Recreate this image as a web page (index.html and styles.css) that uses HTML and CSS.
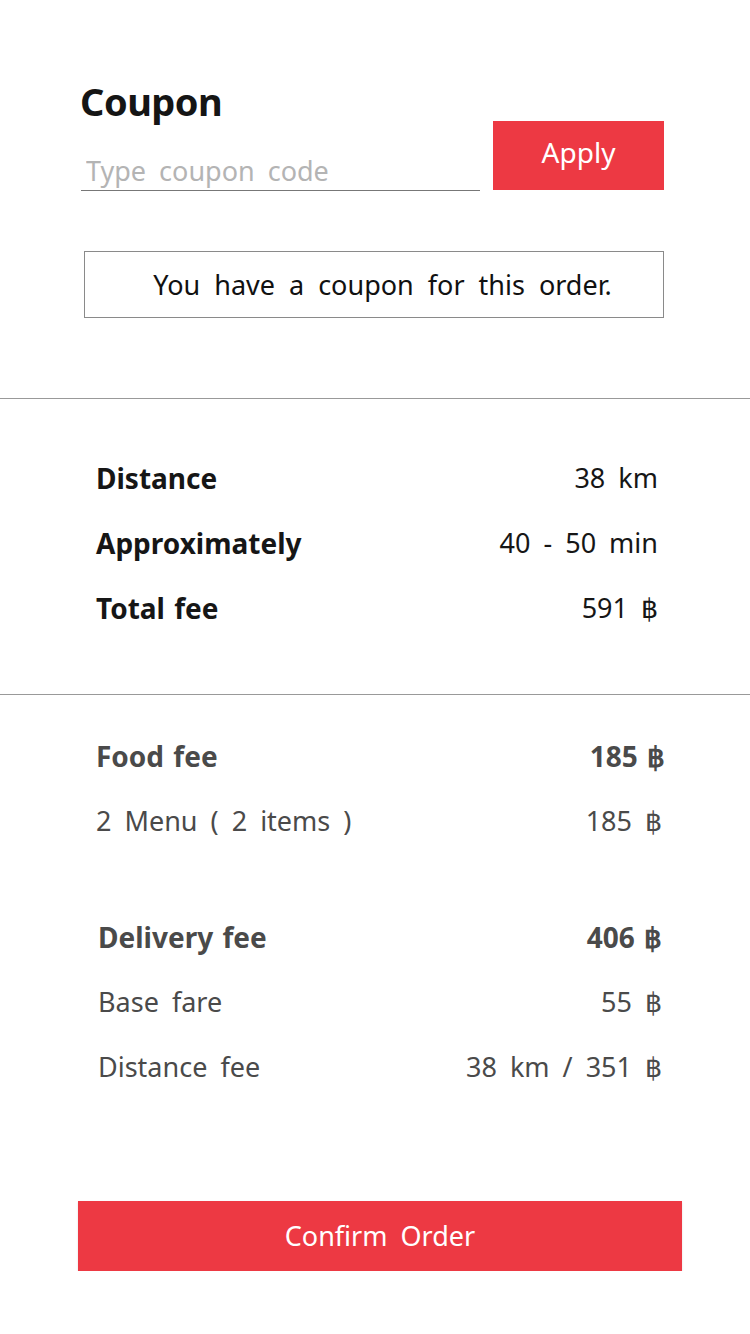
FILE: index.html
```html
<!DOCTYPE html>
<html lang="en">
<head>
<meta charset="utf-8">
<title>Coupon</title>
<link rel="stylesheet" href="styles.css">
</head>
<body>
<main class="page">
  <section class="coupon">
    <h1 class="coupon-title">Coupon</h1>
    <div class="coupon-row">
      <input class="coupon-input" type="text" placeholder="Type coupon code">
      <button class="btn apply-btn" type="button">Apply</button>
    </div>
    <div class="coupon-note">You have a coupon for this order.</div>
  </section>

  <section class="summary">
    <div class="row strong"><span>Distance</span><span class="val">38 km</span></div>
    <div class="row strong"><span>Approximately</span><span class="val">40 - 50 min</span></div>
    <div class="row strong"><span>Total fee</span><span class="val">591 ฿</span></div>
  </section>

  <section class="details">
    <div class="group">
      <div class="row head"><span>Food fee</span><span>185 ฿</span></div>
      <div class="row"><span>2 Menu ( 2 items )</span><span>185 ฿</span></div>
    </div>
    <div class="group group-delivery">
      <div class="row head"><span>Delivery fee</span><span>406 ฿</span></div>
      <div class="row"><span>Base fare</span><span>55 ฿</span></div>
      <div class="row"><span>Distance fee</span><span>38 km / 351 ฿</span></div>
    </div>
  </section>

  <div class="confirm-wrap">
    <button class="btn confirm-btn" type="button">Confirm Order</button>
  </div>
</main>
</body>
</html>
```

FILE: styles.css
```css
* { box-sizing: border-box; }
html, body { margin: 0; padding: 0; background: #fff; }
body {
  font-family: "Noto Sans", "Open Sans", sans-serif;
  color: #111;
  width: 750px;
  word-spacing: 6px;
}
.page { display: flex; flex-direction: column; }

.coupon { padding: 80px 86px 0 80px; }
.coupon-title {
  margin: 0;
  font-size: 38px;
  font-weight: 700;
  line-height: 42px;
  color: #151515;
  letter-spacing: -0.5px;
}
.coupon-row {
  display: flex;
  align-items: flex-end;
  gap: 13px;
  margin-top: -1px;
}
.coupon-input {
  width: 399px;
  margin-left: 1px;
  height: 40px;
  border: none;
  border-bottom: 1px solid #777;
  padding: 0 0 0 5px;
  font-family: inherit;
  font-size: 27px;
  word-spacing: 6px;
  color: #333;
  outline: none;
  background: transparent;
}
.coupon-input::placeholder { color: #b4b4b4; }
.btn {
  border: none;
  background: #ed3943;
  color: #fff;
  font-family: inherit;
  font-size: 27px;
  word-spacing: 6px;
  cursor: pointer;
  padding: 0;
}
.apply-btn {
  width: 171px;
  height: 69px;
  margin-bottom: 1px;
  padding-bottom: 8px;
  font-size: 28px;
}
.coupon-note {
  margin: 60px 0 0 4px;
  width: 580px;
  height: 67px;
  border: 1px solid #8a8a8a;
  display: flex;
  align-items: center;
  justify-content: center;
  padding-left: 17px;
  font-size: 27px;
  word-spacing: 7px;
  color: #111;
}

.summary {
  margin-top: 80px;
  border-top: 1px solid #999;
  padding: 46px 92px 54px 96px;
}
.row {
  height: 65px;
  display: flex;
  align-items: center;
  justify-content: space-between;
  font-size: 27px;
}
.summary .row { color: #161616; }
.summary .row span:first-child { font-weight: 700; font-size: 28px; word-spacing: 2px; }

.details {
  border-top: 1px solid #999;
  padding: 28px 86px 0 96px;
  color: #4a4a4a;
}
.details .row.head { font-weight: 700; font-size: 28px; word-spacing: 2px; }
.group:first-child .row.head { margin-right: -1px; }
.group-delivery { margin-top: 51px; padding-left: 2px; padding-right: 2px; }
.group:first-child .row:not(.head) { padding-right: 2px; }

.confirm-wrap { padding: 102px 68px 0 78px; }
.confirm-btn {
  width: 604px;
  height: 70px;
  box-shadow: 0 1px 2px rgba(0,0,0,0.12);
  padding-bottom: 2px;
}
```
